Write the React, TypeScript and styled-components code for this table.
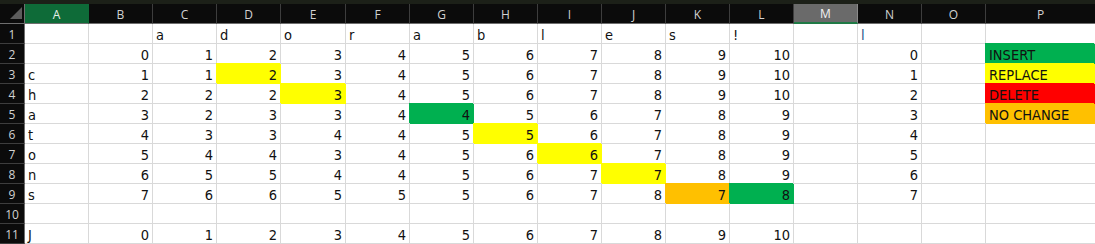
import React from "react";
import styled, { createGlobalStyle, css } from "styled-components";

const GlobalStyle = createGlobalStyle`
  html, body { margin: 0; padding: 0; background: #ffffff; overflow: hidden; }
`;

type Fill = "green" | "yellow" | "red" | "orange";
const FILLS: Record<Fill, string> = {
  green: "#00b050",
  yellow: "#ffff00",
  red: "#ff0000",
  orange: "#ffc000",
};

const Sheet = styled.div`
  width: 1095px;
  height: 244px;
  overflow: hidden;
  background: #ffffff;
  display: flex;
  flex-direction: column;
`;

const TopStrip = styled.div`
  height: 4px;
  flex: 0 0 4px;
  background: #1c2018;
`;

const Grid = styled.div`
  display: grid;
  grid-template-columns: 25px repeat(4, 64px) 65px repeat(10, 64px) minmax(0, 1fr);
  grid-auto-rows: 20px;
`;

const Corner = styled.div`
  position: relative;
  background: #0b0b0b;
  border-right: 1px solid #6e6e6e;
  border-bottom: 1px solid #6e6e6e;
  box-sizing: border-box;
`;

const CornerMark = styled.svg`
  position: absolute;
  left: 0;
  top: 0;
`;

const ColHeader = styled.div<{ $state: "normal" | "active" | "selected"; $last?: boolean }>`
  box-sizing: border-box;
  display: flex;
  align-items: center;
  justify-content: center;
  font-family: "Open Sans", "Noto Sans", sans-serif;
  font-size: 12px;
  color: #d2d2d2;
  background: #0b0b0b;
  border-right: ${(p) => (p.$last ? "none" : "1px solid #3d3d3d")};
  border-bottom: 1px solid #6e6e6e;
  padding-top: 1px;
  ${(p) =>
    p.$state === "active" &&
    css`
      background: #0e6b38;
      color: #e4efe7;
      border-right-color: #0e6b38;
    `}
  ${(p) =>
    p.$state === "selected" &&
    css`
      background: #6a6a6a;
      color: #f2f2f2;
      border-right-color: #8a8a8a;
      border-bottom: 2px solid #1f7a45;
    `}
`;

const RowHeader = styled.div`
  box-sizing: border-box;
  display: flex;
  align-items: center;
  justify-content: center;
  font-family: "Open Sans", "Noto Sans", sans-serif;
  font-size: 12px;
  color: #d2d2d2;
  background: #0b0b0b;
  border-right: 1px solid #6e6e6e;
  border-bottom: 1px solid #3d3d3d;
  padding-top: 1px;
`;

const Cell = styled.div<{ $num?: boolean; $fill?: Fill; $last?: boolean; $tint?: string }>`
  box-sizing: border-box;
  display: flex;
  align-items: flex-end;
  justify-content: ${(p) => (p.$num ? "flex-end" : "flex-start")};
  padding: 0 3px 0 3px;
  font-family: "Liberation Sans Narrow", "DejaVu Sans Condensed", "Liberation Sans", sans-serif;
  font-size: 14.5px;
  line-height: 16px;
  color: ${(p) => p.$tint ?? "#111111"};
  white-space: nowrap;
  overflow: hidden;
  background: #ffffff;
  border-right: ${(p) => (p.$last ? "none" : "1px solid #d9d9d9")};
  border-bottom: 1px solid #d9d9d9;
  ${(p) =>
    p.$fill &&
    css`
      background: ${FILLS[p.$fill]};
      border-right-color: ${FILLS[p.$fill]};
      border-bottom-color: ${FILLS[p.$fill]};
      box-shadow: -1px -1px 0 0 ${FILLS[p.$fill]};
    `}
`;

const COLS = ["A", "B", "C", "D", "E", "F", "G", "H", "I", "J", "K", "L", "M", "N", "O", "P"];

type CellData = { v: string | number; fill?: Fill; tint?: string } | string | number | null;

const n = (start: number[]) => start;

const rows: CellData[][] = [
  [null, null, "a", "d", "o", "r", "a", "b", "l", "e", "s", "!", null, { v: "l", tint: "#24548a" }, null, null],
  [null, ...n([0, 1, 2, 3, 4, 5, 6, 7, 8, 9, 10]), null, 0, null, { v: "INSERT", fill: "green" }],
  ["c", 1, 1, { v: 2, fill: "yellow" }, 3, 4, 5, 6, 7, 8, 9, 10, null, 1, null, { v: "REPLACE", fill: "yellow" }],
  ["h", 2, 2, 2, { v: 3, fill: "yellow" }, 4, 5, 6, 7, 8, 9, 10, null, 2, null, { v: "DELETE", fill: "red" }],
  ["a", 3, 2, 3, 3, 4, { v: 4, fill: "green" }, 5, 6, 7, 8, 9, null, 3, null, { v: "NO CHANGE", fill: "orange" }],
  ["t", 4, 3, 3, 4, 4, 5, { v: 5, fill: "yellow" }, 6, 7, 8, 9, null, 4, null, null],
  ["o", 5, 4, 4, 3, 4, 5, 6, { v: 6, fill: "yellow" }, 7, 8, 9, null, 5, null, null],
  ["n", 6, 5, 5, 4, 4, 5, 6, 7, { v: 7, fill: "yellow" }, 8, 9, null, 6, null, null],
  ["s", 7, 6, 6, 5, 5, 5, 6, 7, 8, { v: 7, fill: "orange" }, { v: 8, fill: "green" }, null, 7, null, null],
  [null, null, null, null, null, null, null, null, null, null, null, null, null, null, null, null],
  ["J", 0, 1, 2, 3, 4, 5, 6, 7, 8, 9, 10, null, null, null, null],
];

function renderCell(d: CellData, r: number, c: number) {
  const last = c === COLS.length - 1;
  if (d === null) return <Cell key={`${r}-${c}`} $last={last} />;
  if (typeof d === "string" || typeof d === "number") {
    return (
      <Cell key={`${r}-${c}`} $num={typeof d === "number"} $last={last}>
        {d}
      </Cell>
    );
  }
  return (
    <Cell key={`${r}-${c}`} $num={typeof d.v === "number"} $fill={d.fill} $tint={d.tint} $last={last}>
      {d.v}
    </Cell>
  );
}

export default function App() {
  return (
    <>
      <GlobalStyle />
      <Sheet>
        <TopStrip />
        <Grid>
          <Corner>
            <CornerMark width="24" height="19" viewBox="0 0 24 19">
              <polygon points="10,15 22,15 22,3" fill="#5c5c5c" />
            </CornerMark>
          </Corner>
          {COLS.map((c, i) => (
            <ColHeader
              key={c}
              $state={c === "A" ? "active" : c === "M" ? "selected" : "normal"}
              $last={i === COLS.length - 1}
            >
              {c}
            </ColHeader>
          ))}
          {rows.map((row, r) => (
            <React.Fragment key={r}>
              <RowHeader>{r + 1}</RowHeader>
              {row.map((d, c) => renderCell(d, r, c))}
            </React.Fragment>
          ))}
        </Grid>
      </Sheet>
    </>
  );
}
